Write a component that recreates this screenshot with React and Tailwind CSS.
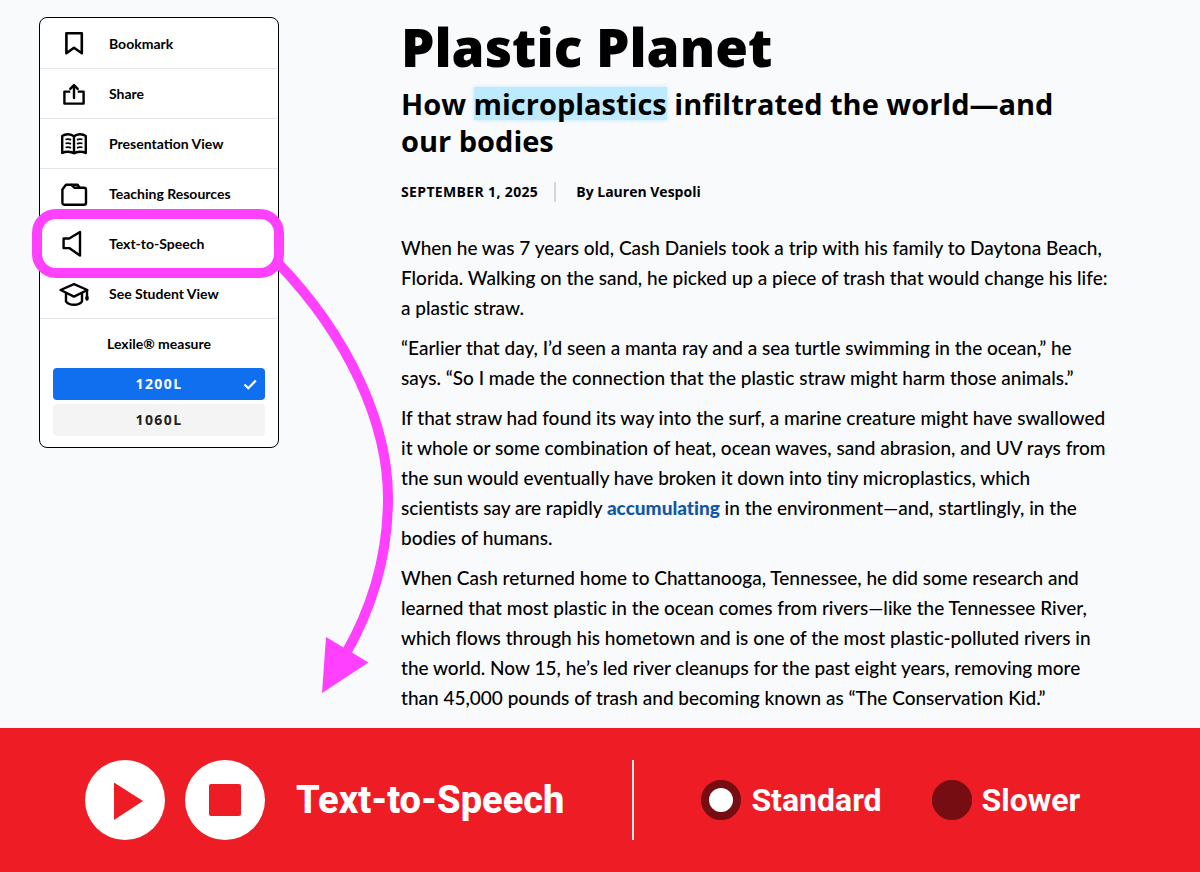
import { useState } from "react";

const BookmarkIcon = () => (
  <svg width="32" height="32" viewBox="0 0 32 32" fill="none" stroke="black" strokeWidth="2.6" strokeLinejoin="round">
    <path d="M8.4 5.2h15.400v20L16 19.800l-7.600 5.400z" />
  </svg>
);

const ShareIcon = () => (
  <svg width="32" height="32" viewBox="0 0 32 32" fill="none" stroke="black" strokeWidth="2.4" strokeLinejoin="round">
    <path d="M12.300 13.600H6.400v12h19.200v-12h-5.900" />
    <path d="M16 20V7.500M12.300 10.800L16 7l3.700 3.800" strokeLinecap="round" />
  </svg>
);

const BookIcon = () => (
  <svg width="32" height="32" viewBox="0 0 32 32" fill="none" stroke="black" strokeWidth="2.4" strokeLinejoin="round">
    <path d="M16 8.400C13 5.600 7.500 5.600 4.200 8v17c3.300-1.800 8.800-1.800 11.800.4 3-2.200 8.500-2.200 11.800-.4V8C24.500 5.600 19 5.600 16 8.400zM16 8.400v17" />
    <path d="M7.500 11.500q3-1 5.500.4M7.500 15.500q3-1 5.500.4M7.500 19.500q3-1 5.500.4M24.500 11.500q-3-1-5.500.4M24.500 15.500q-3-1-5.500.4M24.500 19.500q-3-1-5.500.4" strokeWidth="1.800" />
  </svg>
);

const FolderIcon = () => (
  <svg width="32" height="32" viewBox="0 0 32 32" fill="none" stroke="black" strokeWidth="2.4" strokeLinejoin="round">
    <path d="M4.400 11.500L8 6.800h5.400l3 2.900h9.600a2 2 0 0 1 2 2v13.100a2 2 0 0 1-2 2H6.400a2 2 0 0 1-2-2z" />
    <path d="M13.400 6.800h6.200l2 2.900" />
  </svg>
);

const SpeakerIcon = () => (
  <svg width="32" height="32" viewBox="0 0 32 32" fill="none" stroke="black" strokeWidth="2.4" strokeLinejoin="round">
    <path d="M5.600 10.500h5.600L22 4v23.600l-10.800-7.500H5.600z" />
  </svg>
);

const CapIcon = () => (
  <svg width="32" height="32" viewBox="0 0 32 32" fill="none" stroke="black" strokeWidth="2.400" strokeLinejoin="round" strokeLinecap="round">
    <path d="M2.600 12L16 6.200 29.400 12 16 18.600z" />
    <path d="M8 15.500v8c3.500 4.400 12.500 4.400 16 0v-8M29 12.500V20" />
    <path d="M29 19.500v1.500" strokeWidth="3.400" />
  </svg>
);

const menuItems = [
  { label: "Bookmark", icon: BookmarkIcon },
  { label: "Share", icon: ShareIcon },
  { label: "Presentation View", icon: BookIcon },
  { label: "Teaching Resources", icon: FolderIcon },
  { label: "Text-to-Speech", icon: SpeakerIcon, highlighted: true },
  { label: "See Student View", icon: CapIcon },
];

const levels = ["1200L", "1060L"];

const paragraphs = [
  "When he was 7 years old, Cash Daniels took a trip with his family to Daytona Beach, Florida. Walking on the sand, he picked up a piece of trash that would change his life: a plastic straw.",
  "“Earlier that day, I’d seen a manta ray and a sea turtle swimming in the ocean,” he says. “So I made the connection that the plastic straw might harm those animals.”",
];

function Sidebar() {
  const [level, setLevel] = useState("1200L");

  return (
    <aside className="w-60 shrink-0 self-start rounded-lg border border-black bg-white font-['Lato',sans-serif] text-sm font-bold">
      <ul className="pt-px">
        {menuItems.map(({ label, icon: Icon, highlighted }) => (
          <li key={label} className="relative border-b border-gray-200">
            <button className="flex h-[49px] w-full items-center gap-[19px] pl-[18px] text-left">
              <Icon />
              {label}
            </button>
            {highlighted && (
              <div className="pointer-events-none absolute -inset-y-[10px] -right-1.5 -left-2 z-10 rounded-3xl border-[10px] border-[#ff40ff]" />
            )}
          </li>
        ))}
      </ul>
      <div className="px-[13px] pt-[15px] pb-[11px]">
        <h2 className="text-center">Lexile® measure</h2>
        <div className="mt-3.5 flex flex-col gap-1 font-['Open_Sans',sans-serif] tracking-widest">
          {levels.map((item) => (
            <button
              key={item}
              onClick={() => setLevel(item)}
              className={
                item === level
                  ? "relative h-8 rounded bg-[#0f6fef] text-white"
                  : "relative h-8 rounded bg-[#f4f4f4] text-[#222222]"
              }
            >
              {item}
              {item === level && (
                <svg className="absolute top-2 right-2" width="14" height="16" viewBox="0 0 14 16" fill="none" stroke="white" strokeWidth="2.2">
                  <path d="M1.5 8.500l3.800 3.800L12.800 4.500" />
                </svg>
              )}
            </button>
          ))}
        </div>
      </div>
    </aside>
  );
}

// Arrow from the highlighted menu item down to the player bar
function Arrow() {
  return (
    <svg className="pointer-events-none absolute top-[250px] left-[270px]" width="130" height="450" viewBox="270 250 130 450">
      <path d="M278 263C350 338 388 425 388 498C388 560 371 610 345 655" fill="none" stroke="#ff40ff" strokeWidth="10" />
      <path d="M326 637L368.5 662.5L322 693z" fill="#ff40ff" />
    </svg>
  );
}

function Article() {
  return (
    <article className="min-w-0 max-w-[710px] flex-1 text-black">
      <h1 className="font-['Open_Sans',sans-serif] text-[53px] leading-[60px] font-extrabold">Plastic Planet</h1>
      <p className="mt-2 font-['Open_Sans',sans-serif] text-[29px] leading-[37px] font-bold">
        How{" "}
        <mark className="inline-block bg-[#bdeaff] leading-[33px] text-black shadow-[0_0_4px_#bdeaff]">
          microplastics
        </mark>{" "}
        infiltrated the world—and our bodies
      </p>
      <div className="mt-[23px] flex items-center font-['Open_Sans',sans-serif] text-sm leading-5 font-bold">
        <time className="tracking-wide">SEPTEMBER 1, 2025</time>
        <span className="ml-4 border-l-2 border-gray-300 pl-5">By Lauren Vespoli</span>
      </div>
      <div className="mt-[31px] flex flex-col gap-2.5 font-['Lato',sans-serif] text-[19px] leading-[30px] font-medium [font-variant-ligatures:no-common-ligatures]">
        {paragraphs.map((text, index) => (
          <p key={index}>{text}</p>
        ))}
        <p>
          If that straw had found its way into the surf, a marine creature might have swallowed it whole or some
          combination of heat, ocean waves, sand abrasion, and UV rays from the sun would eventually have broken it
          down into tiny microplastics, which scientists say are rapidly{" "}
          <a href="#accumulating" className="font-black text-[#1257a5]">
            accumulating
          </a>{" "}
          in the environment—and, startlingly, in the bodies of humans.
        </p>
        <p>
          When Cash returned home to Chattanooga, Tennessee, he did some research and learned that most plastic in the
          ocean comes from rivers—like the Tennessee River, which flows through his hometown and is one of the most
          plastic-polluted rivers in the world. Now 15, he’s led river cleanups for the past eight years, removing more
          than 45,000 pounds of trash and becoming known as “The Conservation Kid.”
        </p>
      </div>
    </article>
  );
}

function Player() {
  const [speed, setSpeed] = useState("Standard");

  return (
    <section className="flex items-center bg-[#ee1c25] px-[85px] py-8 font-['Roboto',sans-serif] font-bold text-white">
      <div className="flex items-center gap-5">
        <button aria-label="Play" className="flex size-20 items-center justify-center rounded-full bg-white">
          <svg width="80" height="80" viewBox="0 0 80 80" fill="#ee1c25">
            <path d="M29 22.500L58 41L29 60z" />
          </svg>
        </button>
        <button aria-label="Stop" className="flex size-20 items-center justify-center rounded-full bg-white">
          <span className="size-8 rounded-xs bg-[#ee1c25]" />
        </button>
      </div>
      <h2 className="ml-[31px] text-[38px] leading-none font-extrabold">Text-to-Speech</h2>
      <div className="ml-[68px] h-20 w-0.5 bg-white/90" />
      <div className="ml-[67px] flex gap-[50px] text-[32px]">
        {["Standard", "Slower"].map((name) => (
          <label key={name} className="flex items-center gap-2.5">
            <input
              type="radio"
              name="speed"
              checked={speed === name}
              onChange={() => setSpeed(name)}
              className="size-10 appearance-none rounded-full border-8 border-[#750d12] bg-[#750d12] checked:bg-white"
            />
            {name}
          </label>
        ))}
      </div>
    </section>
  );
}

export default function App() {
  return (
    <div className="flex min-h-screen flex-col bg-[#f9fafc]">
      <main className="relative flex grow gap-[122px] pt-[17px] pr-10 pb-3 pl-[39px]">
        <Sidebar />
        <Article />
        <Arrow />
      </main>
      <Player />
    </div>
  );
}
